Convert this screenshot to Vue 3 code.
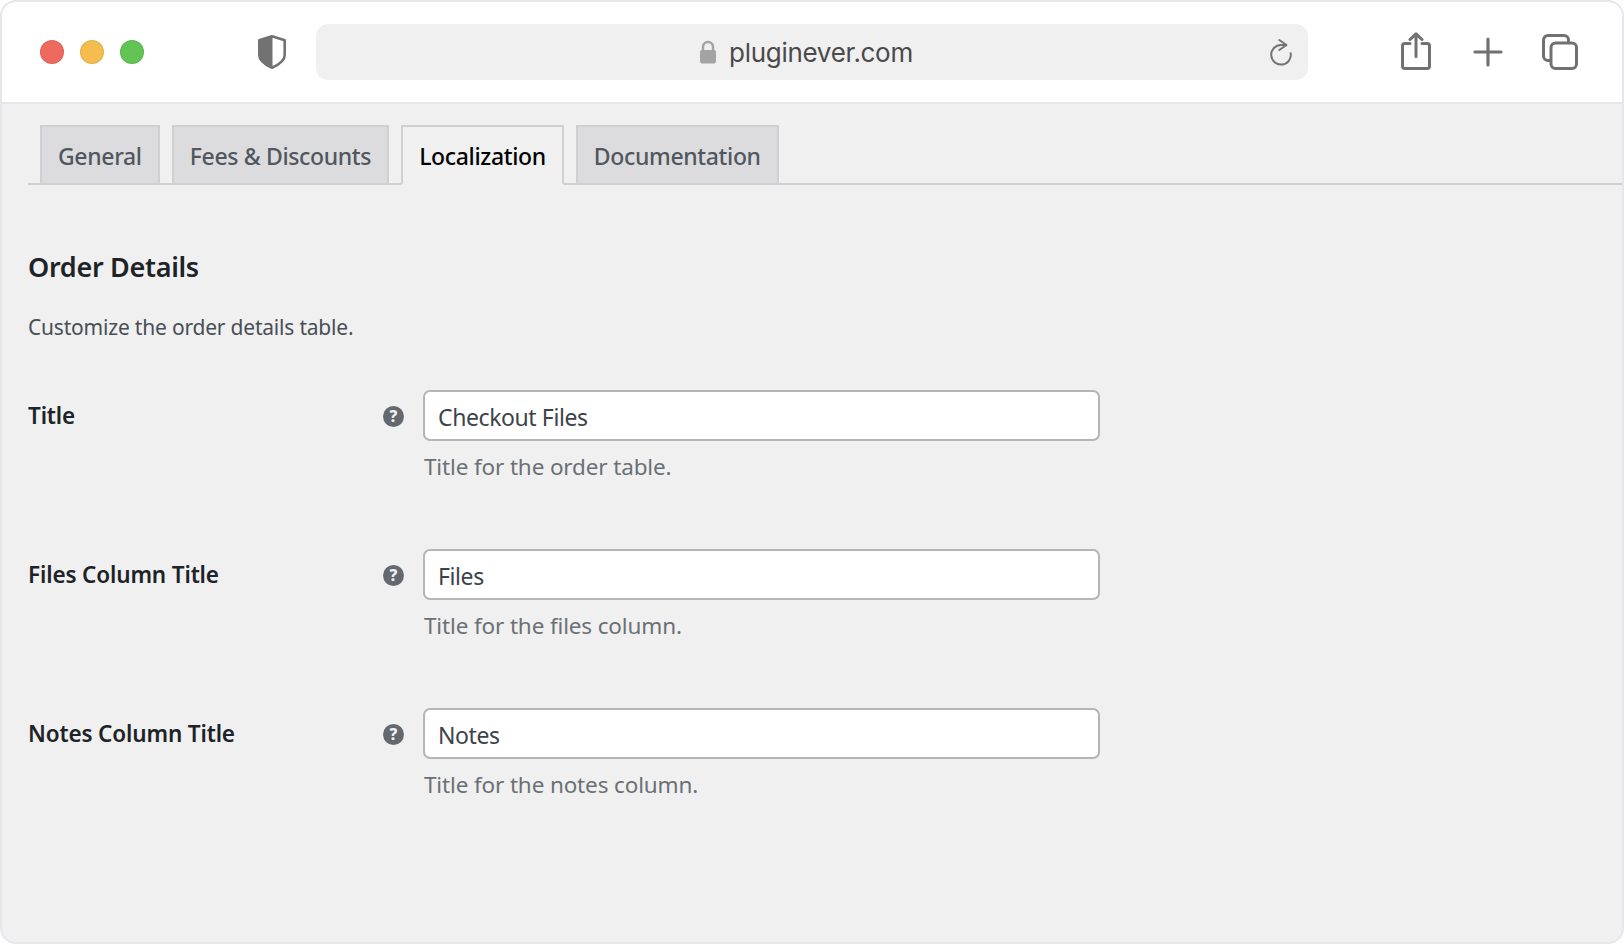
<script setup>
const tabs = [
  { name: 'General' },
  { name: 'Fees & Discounts' },
  { name: 'Localization', active: true },
  { name: 'Documentation' },
]
const rows = [
  { label: 'Title', value: 'Checkout Files', hint: 'Title for the order table.' },
  { label: 'Files Column Title', value: 'Files', hint: 'Title for the files column.' },
  { label: 'Notes Column Title', value: 'Notes', hint: 'Title for the notes column.' },
]
</script>

<template>
  <div class="window">
    <header class="toolbar">
      <div class="lights">
        <span class="light red"></span>
        <span class="light yellow"></span>
        <span class="light green"></span>
      </div>
      <svg class="shield" width="28" height="34" viewBox="0 0 28 34">
        <path d="M14 1.300 L26.700 5.300 V20 C26.700 25.500 19.500 30.300 14 32.700 C8.500 30.300 1.300 25.500 1.300 20 V5.300 Z" fill="#fff" stroke="#727272" stroke-width="2.600" stroke-linejoin="round"/>
        <path d="M14 1.300 L1.300 5.300 V20 C1.300 25.500 8.500 30.300 14 32.700 Z" fill="#727272" stroke="#727272" stroke-width="1" stroke-linejoin="round"/>
      </svg>
      <div class="url">
        <div class="address">
          <svg class="lock" width="18" height="24" viewBox="0 0 18 24">
            <path d="M4 11V7a5 5 0 0 1 10 0v4" fill="none" stroke="#a3a3a3" stroke-width="2.400"/>
            <rect x="1" y="10" width="16" height="13.500" rx="2" fill="#a3a3a3"/>
          </svg>
          <span>pluginever.com</span>
        </div>
        <svg class="reload" width="24" height="28" viewBox="0 0 24 28" fill="none" stroke="#737373" stroke-width="2" stroke-linecap="round" stroke-linejoin="round">
          <path d="M15 7 H11 A9.800 9.800 0 1 0 20.700 15.300"/>
          <path d="M9.300 2 L16.500 7 L9.300 12"/>
        </svg>
      </div>
      <div class="actions">
        <svg class="share" width="32" height="38" viewBox="0 0 32 38" fill="none" stroke="#717171" stroke-width="3" stroke-linecap="round" stroke-linejoin="round">
          <path d="M10 11.500H5A2.500 2.500 0 0 0 2.500 14V34A2.500 2.500 0 0 0 5 36.500H27A2.500 2.500 0 0 0 29.500 34V14A2.500 2.500 0 0 0 27 11.500H22"/>
          <path d="M16 24.500V1.800M10 7.500L16 1.800L22 7.500"/>
        </svg>
        <svg class="plus" width="30" height="30" viewBox="0 0 30 30" fill="none" stroke="#717171" stroke-width="3.200" stroke-linecap="round">
          <path d="M15 2V28M2 15H28"/>
        </svg>
        <svg width="36" height="36" viewBox="0 0 36 36" fill="none" stroke="#717171" stroke-width="3" stroke-linejoin="round">
          <path d="M8 26.500H6A4.500 4.500 0 0 1 1.500 22V6A4.500 4.500 0 0 1 6 1.500H22A4.500 4.500 0 0 1 26.500 6V8"/>
          <rect x="9" y="9" width="25.500" height="25.500" rx="4.500"/>
        </svg>
      </div>
    </header>

    <main class="content">
      <nav class="tabs">
        <a v-for="tab in tabs" :key="tab.name" class="tab" :class="{ active: tab.active }">{{ tab.name }}</a>
      </nav>
      <h2 class="heading">Order Details</h2>
      <p class="intro">Customize the order details table.</p>
      <section class="form">
        <div v-for="row in rows" :key="row.label" class="row">
          <label class="label">{{ row.label }}</label>
          <span class="help">?</span>
          <div class="field">
            <input class="input" type="text" :value="row.value" />
            <p class="hint">{{ row.hint }}</p>
          </div>
        </div>
      </section>
    </main>
  </div>
</template>

<style>
html, body { margin: 0; background: #fff; }
</style>

<style scoped>
.window {
  box-sizing: border-box;
  width: 1624px;
  height: 944px;
  border: 2px solid #e6e6eb;
  border-radius: 16px;
  overflow: hidden;
  background: #f0f0f1;
  font-family: "Noto Sans", "Open Sans", sans-serif;
}
.toolbar {
  box-sizing: border-box;
  height: 102px;
  display: flex;
  align-items: center;
  background: #fff;
  border-bottom: 2px solid #e6e6eb;
}
.lights {
  display: flex;
  gap: 16px;
  margin-left: 38px;
}
.light {
  box-sizing: border-box;
  width: 24px;
  height: 24px;
  border-radius: 50%;
  border: 1px solid rgba(0, 0, 0, 0.08);
}
.red { background: #ee6a5f; }
.yellow { background: #f5bd4f; }
.green { background: #61c454; }
.shield {
  margin-left: 114px;
  margin-right: 30px;
  flex: none;
}
.url {
  position: relative;
  box-sizing: border-box;
  width: 992px;
  height: 56px;
  border-radius: 12px;
  background: #f0f0f0;
  display: flex;
  align-items: center;
  justify-content: center;
}
.address {
  display: flex;
  align-items: center;
  gap: 12px;
  margin-right: 12px;
  font-family: Inter, "Liberation Sans", sans-serif;
  font-size: 26px;
  letter-spacing: -0.3px;
  color: #4a4a4a;
}
.lock { flex: none; }
.reload {
  position: absolute;
  right: 14px;
  top: 14px;
}
.actions {
  display: flex;
  align-items: center;
  margin-left: 92px;
  gap: 40px;
}
.share { margin-bottom: 2px; }
.plus { margin-left: 1px; margin-right: -1px; }
.content {
  padding: 21px 0 0 26px;
}
.tabs {
  display: flex;
  height: 60px;
  box-sizing: border-box;
  padding-left: 12px;
  gap: 12px;
  border-bottom: 2px solid #cfd0d2;
}
.tab {
  box-sizing: border-box;
  height: 60px;
  padding: 1px 16px 0;
  display: flex;
  align-items: center;
  border: 2px solid #cfd0d2;
  background: #dcdcde;
  color: #50575e;
  font-size: 23px;
  font-weight: 500;
  letter-spacing: -0.35px;
}
.tab.active {
  background: #f0f0f1;
  border-bottom-color: #f0f0f1;
  color: #000;
}
.heading {
  margin: 64px 0 0;
  font-size: 27px;
  line-height: 36px;
  font-weight: 600;
  letter-spacing: -0.3px;
  color: #1d2327;
}
.intro {
  margin: 27px 0 0;
  font-size: 21px;
  line-height: 30px;
  letter-spacing: -0.2px;
  color: #484e55;
}
.form {
  margin-top: 48px;
}
.row {
  display: grid;
  grid-template-columns: 355px 40px 677px;
  height: 159px;
  align-items: start;
}
.label {
  font-size: 22.500px;
  line-height: 30px;
  font-weight: 600;
  letter-spacing: -0.15px;
  color: #1d2327;
  padding-top: 11px;
}
.help {
  width: 21px;
  height: 21px;
  margin-top: 16px;
  border-radius: 50%;
  background: #646970;
  color: #f0f0f1;
  font-size: 16px;
  line-height: 21px;
  font-weight: 800;
  text-align: center;
}
.field { min-width: 0; }
.input {
  box-sizing: border-box;
  display: block;
  width: 677px;
  height: 51px;
  padding: 3px 13px 0;
  border: 2px solid #b4b5b8;
  border-radius: 7px;
  background: #fff;
  color: #3c434a;
  font-family: inherit;
  font-size: 23px;
  letter-spacing: -0.4px;
  outline: none;
}
.hint {
  margin: 11px 0 0 1px;
  font-size: 22.500px;
  line-height: 30px;
  letter-spacing: -0.14px;
  color: #6b7075;
}
</style>
